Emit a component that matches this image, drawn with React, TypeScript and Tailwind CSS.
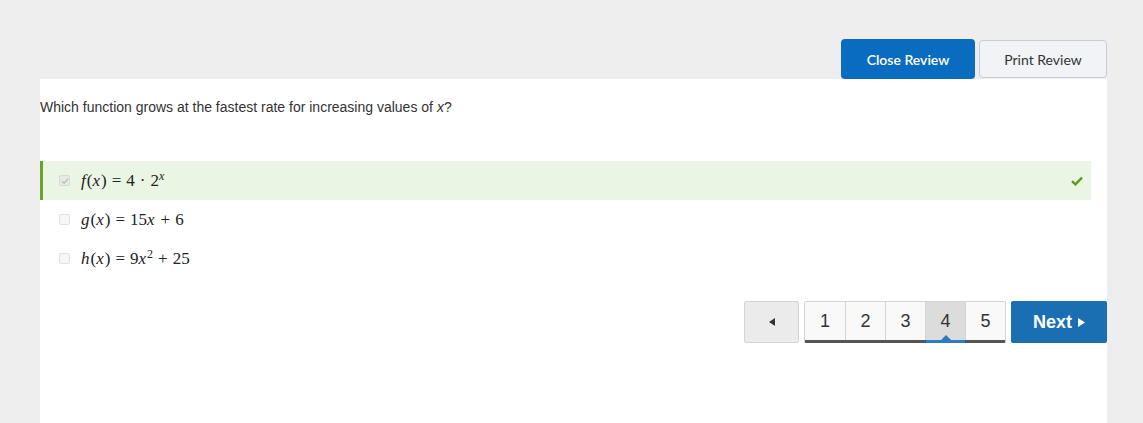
import { useState } from 'react'

function V({ children }: { children: React.ReactNode }) {
  return <i className="pr-[1px]">{children}</i>
}

function Op({ children }: { children: React.ReactNode }) {
  return <span className="mx-[5px]">{children}</span>
}

const options = [
  {
    id: 'f',
    label: <><V>f</V>(<V>x</V>)<Op>=</Op>4<Op>·</Op>2<sup className="text-[12px] italic">x</sup></>,
    correct: true,
  },
  { id: 'g', label: <><V>g</V>(<V>x</V>)<Op>=</Op>15<V>x</V><Op>+</Op>6</>, correct: false },
  {
    id: 'h',
    label: <><V>h</V>(<V>x</V>)<Op>=</Op>9<V>x</V><sup className="text-[12px]">2</sup><Op>+</Op>25</>,
    correct: false,
  },
]

function MathText({ children }: { children: React.ReactNode }) {
  return (
    <span className="text-[17px] text-[#222]" style={{ fontFamily: '"Liberation Serif", "Times New Roman", serif' }}>
      {children}
    </span>
  )
}

export default function App() {
  const [page] = useState(4)

  return (
    <div className="w-[1143px] h-[423px] bg-[#eeeeee] overflow-hidden" style={{ fontFamily: '"Liberation Sans", Arial, sans-serif' }}>
      <div className="ml-[40px] w-[1067px] pt-[39px]">
        <div className="flex justify-end items-center gap-[4px] h-[40px]">
          <button
            className="h-[40px] w-[134px] rounded-[4px] bg-[#0a6cbf] text-white text-[14px] font-semibold"
            style={{ fontFamily: 'Lato, "Open Sans", sans-serif' }}
          >
            Close Review
          </button>
          <button
            className="h-[38px] w-[128px] rounded-[4px] bg-[#f1f3f7] border border-[#c8ccd2] text-[#333] text-[14px]"
            style={{ fontFamily: 'Lato, "Open Sans", sans-serif' }}
          >
            Print Review
          </button>
        </div>

        <div className="bg-white h-[344px]">
          <p className="pt-[20px] text-[14px] text-[#333] leading-[17px]">
            Which function grows at the fastest rate for increasing values of <i>x</i>?
          </p>

          <div className="mt-[45px] w-[1051px]">
            {options.map((o) => (
              <div
                key={o.id}
                className={
                  o.correct
                    ? 'h-[39px] flex items-center bg-[#eaf5e3] border-l-[3px] border-[#6ba22d] pl-[16px] pr-[8px]'
                    : 'h-[39px] flex items-center border-l-[3px] border-transparent pl-[16px] pr-[8px]'
                }
              >
                <span
                  className={
                    o.correct
                      ? 'w-[11px] h-[11px] rounded-[2px] border border-[#d6dcd2] bg-[#e6ebe3] flex items-center justify-center'
                      : 'w-[11px] h-[11px] rounded-[2px] border border-[#e2e2e2] bg-[#f7f7f7]'
                  }
                >
                  {o.correct && (
                    <svg width="8" height="8" viewBox="0 0 8 8">
                      <path d="M1 4.2 L3.2 6.2 L7 1.8" stroke="#b8c2b3" strokeWidth="1.4" fill="none" />
                    </svg>
                  )}
                </span>
                <span className="ml-[11px] flex-1">
                  <MathText>{o.label}</MathText>
                </span>
                {o.correct && (
                  <svg width="12" height="10" viewBox="0 0 12 10">
                    <path d="M1 5.2 L4.4 8.4 L11 1.6" stroke="#5f9a1d" strokeWidth="2.4" fill="none" />
                  </svg>
                )}
              </div>
            ))}
          </div>

          <div className="mt-[23px] flex justify-end items-start">
            <button className="w-[55px] h-[42px] bg-[#ebebeb] border border-[#d4d4d4] rounded-[2px] flex items-center justify-center text-[#333]">
              <svg width="6" height="8" viewBox="0 0 6 8">
                <path d="M6 0 L0 4 L6 8 Z" fill="#333" />
              </svg>
            </button>
            <div className="ml-[5px] flex border border-[#d4d4d4] border-b-[3px] border-b-[#555] rounded-[2px] h-[42px]">
              {[1, 2, 3, 4, 5].map((n) => (
                <div
                  key={n}
                  className={
                    n === page
                      ? 'relative w-[40px] bg-[#dcdcdc] border-l border-[#d4d4d4] flex items-center justify-center text-[18px] text-[#333]'
                      : 'w-[40px] bg-[#f9f9f9] border-l border-[#d4d4d4] first:border-l-0 flex items-center justify-center text-[18px] text-[#333]'
                  }
                >
                  {n}
                  {n === page && (
                    <>
                      <span className="absolute left-0 right-0 bottom-[-3px] h-[3px] bg-[#2a7cc4]" />
                      <span className="absolute left-1/2 -translate-x-1/2 bottom-0 w-0 h-0 border-l-[5px] border-r-[5px] border-b-[5px] border-l-transparent border-r-transparent border-b-[#2a7cc4]" />
                    </>
                  )}
                </div>
              ))}
            </div>
            <button className="ml-[5px] w-[96px] h-[42px] bg-[#1a6fb3] rounded-[2px] text-white text-[18px] font-bold flex items-center justify-center gap-[6px]">
              Next
              <svg width="7" height="9" viewBox="0 0 7 9">
                <path d="M0 0 L7 4.5 L0 9 Z" fill="#fff" />
              </svg>
            </button>
          </div>
        </div>
      </div>
    </div>
  )
}
